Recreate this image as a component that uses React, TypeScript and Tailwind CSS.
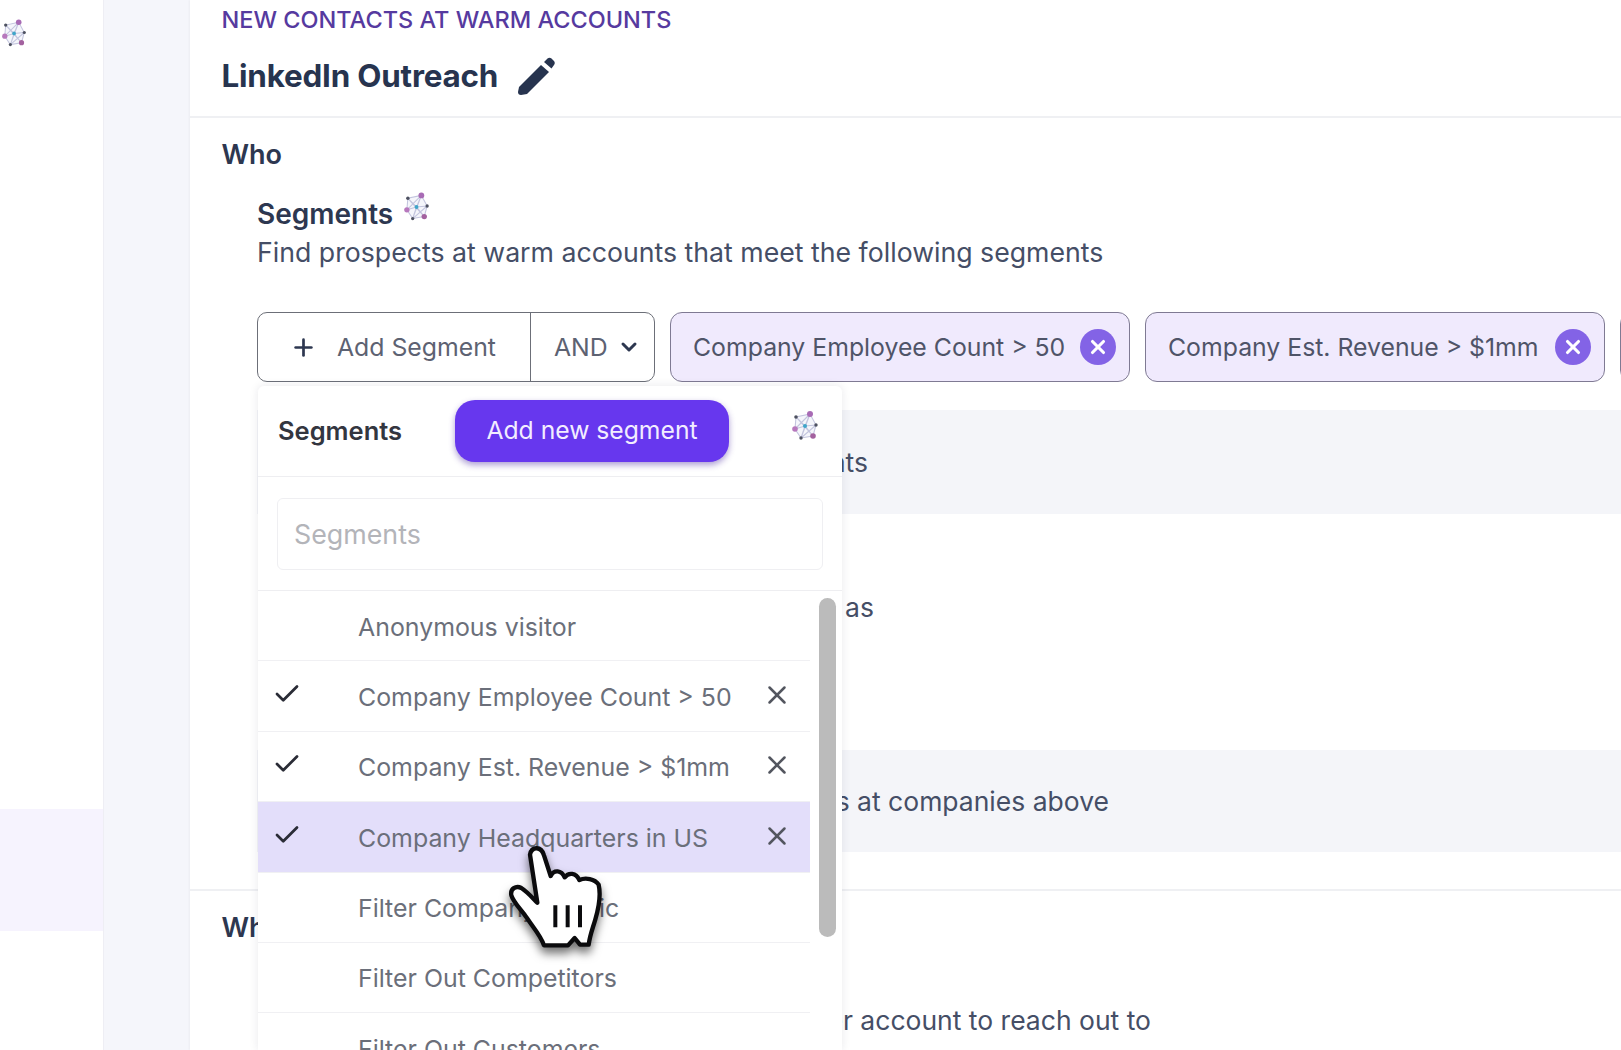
import React from 'react';
import { Check, ChevronDown, Plus, X } from 'lucide-react';

const segments = [
  { label: 'Anonymous visitor', selected: false },
  { label: 'Company Employee Count > 50', selected: true },
  { label: 'Company Est. Revenue > $1mm', selected: true },
  { label: 'Company Headquarters in US', selected: true, active: true },
  { label: 'Filter Company Traffic', selected: false },
  { label: 'Filter Out Competitors', selected: false },
  { label: 'Filter Out Customers', selected: false },
];

const chips = ['Company Employee Count > 50', 'Company Est. Revenue > $1mm', 'Company Headquarters in US'];

function NetworkIcon({ className }: { className?: string }) {
  return (
    <svg viewBox="0 0 28 30" className={className}>
      <g stroke="#c3c5de" strokeWidth="1.1" fill="#eef0f8" fillOpacity="0.6">
        <path d="M18 4 L4 7 L3 19 L9 28 L21 26 L24 15 Z" />
        <path d="M18 4 L13 16 L4 7 M3 19 L13 16 L24 15 M9 28 L13 16 L21 26 M18 4 L3 19 M4 7 L21 26 M18 4 L9 28 M24 15 L9 28" fill="none" />
      </g>
      <circle cx="18" cy="4" r="3" fill="#a86bb5" />
      <circle cx="3" cy="19" r="2.8" fill="#b778bd" />
      <circle cx="21" cy="26" r="2.8" fill="#a3619f" />
      <circle cx="4" cy="7" r="1.8" fill="#4d5160" />
      <circle cx="24" cy="15" r="1.7" fill="#4d5160" />
      <circle cx="9" cy="28" r="1.7" fill="#4d5160" />
      <circle cx="13" cy="16" r="2" fill="#3fa5c9" />
    </svg>
  );
}

function HandCursor() {
  return (
    <svg viewBox="0 0 450 450" className="absolute left-[290px] top-[812px] w-[150px] h-[150px] drop-shadow-[0_6px_5px_rgba(0,0,0,0.55)]">
      <path
        d="M150 128 C155 102 184 102 192 130 L212 192 C222 172 244 174 254 196 C266 180 288 182 298 204 C316 196 344 200 356 218 C362 244 356 288 346 322 C338 350 330 368 326 398 L300 398 L284 378 L264 400 L192 400 C182 370 156 342 138 314 C122 292 100 270 94 250 C90 230 108 220 124 228 C140 238 156 256 172 272 Z"
        fill="#fff"
        stroke="#0b0b0d"
        strokeWidth="13"
        strokeLinejoin="round"
      />
      <path d="M226 280 V346 M263 280 V346 M300 280 V346" stroke="#0b0b0d" strokeWidth="12" fill="none" />
    </svg>
  );
}

export default function App() {
  return (
    <div className="relative flex h-[1050px] w-[1621px] overflow-hidden bg-white font-['Inter',sans-serif] text-[#2d3750]">
      {/* Sidebar */}
      <aside className="w-[104px] shrink-0 pt-[18px] border-r border-[#eeeef4] flex flex-col">
        <NetworkIcon className="w-[26px] h-[29px] ml-[2px]" />
        <div className="mt-[762px] h-[122px] bg-[#f6f3fe]" />
      </aside>
      <div className="w-[86px] shrink-0 bg-[#f5f6fb]" />

      {/* Main */}
      <main className="relative flex-1 min-w-0 shadow-[-1px_0_2px_rgba(0,0,0,0.04)]">
        <div className="h-[118px] border-b-2 border-[#eff0f3] pl-[31.5px] pt-[6px]">
          <div className="text-[23.5px] leading-[28px] font-medium text-[#563a9f]">NEW CONTACTS AT WARM ACCOUNTS</div>
          <div className="flex items-center mt-[23px] gap-[20px]">
            <h1 className="text-[31.4px] leading-[36px] font-bold tracking-[-0.2px] text-[#27344f]">LinkedIn Outreach</h1>
            <svg viewBox="0 0 37 38" className="w-[37px] h-[38px]" fill="#27344f">
              <path d="M1 30 L23 8 L31 15 L9 37 L3 38 Q0 38 0 35 Z" />
              <path d="M26 5 L29.5 1.5 Q31.5 0 33.5 1.5 L36 4 Q37.5 6 36 8 L33.5 11.5 Z" />
            </svg>
          </div>
        </div>

        <section className="h-[773px] border-b-2 border-[#eff0f3] overflow-hidden">
          <div className="pl-[31.5px] pt-[21px] text-[27px] leading-[32px] font-semibold">Who</div>
          <div className="pl-[67px] mt-[27px]">
            <div className="flex items-start">
              <span className="text-[28px] leading-[32px] font-semibold">Segments</span>
              <NetworkIcon className="w-[27px] h-[30px] ml-[11px] -mt-[7px]" />
            </div>
            <p className="text-[26.7px] leading-[32px] text-[#454e66] mt-[6px] whitespace-nowrap">
              Find prospects at warm accounts that meet the following segments
            </p>

            <div className="flex items-center gap-[15px] mt-[44px]">
              <div className="flex h-[70px] w-[398px] shrink-0 rounded-[10px] border border-[#6c6f78] bg-white text-[24.8px] text-[#5d6272]">
                <div className="flex w-[273px] items-center border-r border-[#6c6f78] pl-[32px] gap-[20px]">
                  <Plus className="w-[27px] h-[27px] text-[#2d3750]" strokeWidth={2.4} />
                  <span className="pt-[2px]">Add Segment</span>
                </div>
                <div className="flex flex-1 items-center pl-[23px] gap-[9px]">
                  <span className="pt-[2px]">AND</span>
                  <ChevronDown className="w-[24px] h-[24px] text-[#2d3750]" strokeWidth={3} />
                </div>
              </div>
              {chips.map((chip) => (
                <div
                  key={chip}
                  className="flex h-[70px] w-[460px] shrink-0 items-center justify-between rounded-[12px] border border-[#7f7a93] bg-[#f0eafd] pl-[22px] pr-[13px] text-[24.8px] text-[#4f5468] whitespace-nowrap"
                >
                  <span className="pt-[2px]">{chip}</span>
                  <span className="flex h-[36px] w-[36px] items-center justify-center rounded-full bg-[#8363e6]">
                    <X className="w-[22px] h-[22px] text-white" strokeWidth={3.4} />
                  </span>
                </div>
              ))}
            </div>

            <div className="mt-[28px] flex h-[104px] items-center bg-[#f4f5f9] pt-[2px] text-[26.5px] text-[#454e66]">
              <div className="w-[611px] text-right whitespace-nowrap">Find prospects at warm accounts</div>
            </div>
            <div className="mt-[77px] w-[617px] text-right text-[26.5px] leading-[32px] text-[#454e66] whitespace-nowrap">
              Search for job titles such as
            </div>
            <div className="mt-[127px] flex h-[102px] items-center bg-[#f4f5f9] pt-[2px] text-[26.5px] text-[#454e66]">
              <div className="w-[852px] text-right whitespace-nowrap">Find the best prospects at companies above</div>
            </div>
          </div>
        </section>

        <div className="pl-[31.5px] pt-[21px] text-[27px] leading-[32px] font-semibold">What</div>
        <div className="mt-[60px] w-[961px] text-right text-[26.5px] leading-[32px] text-[#454e66] whitespace-nowrap">
          Choose how many contacts per account to reach out to
        </div>

        {/* Segment dropdown */}
        <div className="absolute left-[68px] top-[386px] w-[584px] h-[664px] rounded-t-[6px] bg-white shadow-[0_0_10px_rgba(30,30,60,0.1)] overflow-hidden">
          <div className="flex h-[91px] items-center border-b border-[#eeeef1] pl-[20px]">
            <span className="w-[177px] text-[25.5px] font-semibold text-[#33363f]">Segments</span>
            <button className="h-[62px] w-[274px] rounded-[20px] bg-[#6737ee] text-[24.7px] text-[#f2edff] shadow-[0_3px_6px_rgba(70,40,160,0.45)]">
              Add new segment
            </button>
            <NetworkIcon className="w-[28px] h-[30px] ml-[63px] -mt-[12px]" />
          </div>
          <div className="flex h-[114px] items-center border-b border-[#eeeef1] px-[19px] pt-[1px]">
            <div className="flex h-[72px] w-[546px] items-center rounded-[6px] border border-[#efeff2] pl-[16px] pt-[1px] text-[26.8px] text-[#b3b4b9]">
              Segments
            </div>
          </div>
          <div className="flex">
            <ul className="w-[552px] shrink-0">
              {segments.map((item) => (
                <li
                  key={item.label}
                  className={`flex h-[70.4px] items-center border-b border-[#f0f0f3] text-[24.9px] text-[#6b6f7a] ${item.active ? 'bg-[#e3defa]' : ''}`}
                >
                  <span className="flex w-[100px] shrink-0 justify-center">
                    {item.selected && <Check className="w-[30px] h-[30px] text-[#2a2c36] -translate-x-[21px] -translate-y-[2px]" strokeWidth={2.2} />}
                  </span>
                  <span className="flex-1 pt-[3px] whitespace-nowrap">{item.label}</span>
                  {item.selected && <X className="w-[30px] h-[30px] mr-[18px] text-[#53565f] -translate-y-[1px]" strokeWidth={2} />}
                </li>
              ))}
            </ul>
            <div className="flex-1 pl-[9px] pt-[7px]">
              <div className="h-[339px] w-[17px] rounded-full bg-[#bbbbbb]" />
            </div>
          </div>
        </div>
      </main>

      <div className="absolute left-[190px] top-0">
        <HandCursor />
      </div>
    </div>
  );
}
